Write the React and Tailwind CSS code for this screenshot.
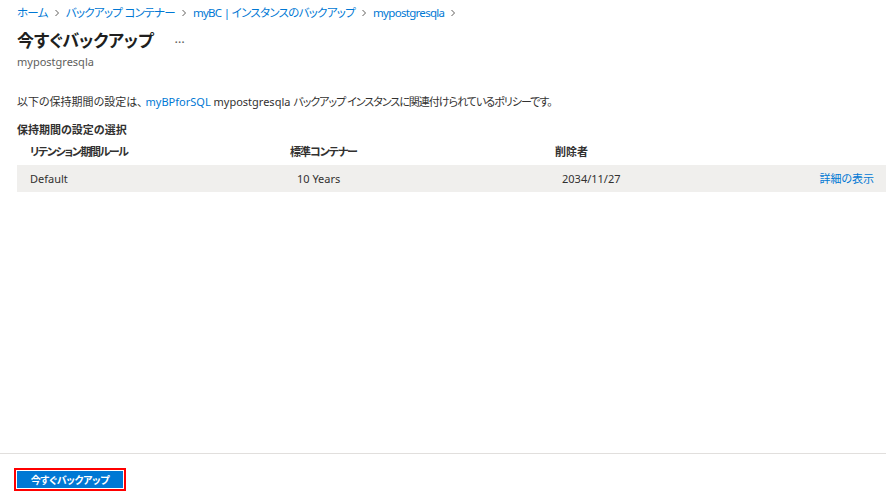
import React from "react";

const font = { fontFamily: '"Noto Sans", "Noto Sans CJK JP", sans-serif' };

function Chevron() {
  return (
    <svg width="8" height="8" viewBox="0 0 8 8" className="mx-[5px] inline-block text-[#605e5c]">
      <path d="M2.5 1 L5.5 4 L2.5 7" fill="none" stroke="currentColor" strokeWidth="1" />
    </svg>
  );
}

export default function App() {
  const crumbs = ["ホーム", "バックアップ コンテナー", "myBC | インスタンスのバックアップ", "mypostgresqla"];
  return (
    <div
      className="w-[886px] h-[501px] bg-white flex flex-col text-[#323130] [font-feature-settings:'palt'] overflow-hidden"
      style={font}
    >
      <div className="flex-1 flex flex-col pl-[17px]">
        <div className="flex items-center h-[14px] mt-[6px] text-[11.5px] text-[#0078d4] leading-none tracking-[-0.7px]">
          {crumbs.map((c, i) => (
            <React.Fragment key={i}>
              <span>{c}</span>
              <Chevron />
            </React.Fragment>
          ))}
        </div>
        <div className="flex items-center mt-[8px] h-[24px]">
          <h1 className="text-[17px] font-bold leading-none text-[#201f1e] tracking-[-0.2px]">今すぐバックアップ</h1>
          <span className="ml-[21px] text-[13px] text-[#605e5c] leading-none -mt-[4px]">…</span>
        </div>
        <div className="mt-[3px] text-[11px] text-[#605e5c] leading-[14px]">mypostgresqla</div>
        <div className="mt-[26px] text-[11px] leading-[14px]">
          以下の保持期間の設定は、 <span className="text-[#0078d4]">myBPforSQL</span> mypostgresqla{" "}
          <span className="tracking-[-1px]">バックアップ インスタンスに関連付けられているポリシーです。</span>
        </div>
        <div className="mt-[14px] text-[11px] font-bold leading-[14px]">保持期間の設定の選択</div>
        <div className="grid grid-cols-[260px_265px_1fr] mt-[8px] text-[11px] font-bold leading-[14px] pl-[13px]">
          <div className="tracking-[-1.4px]">リテンション期間ルール</div>
          <div className="tracking-[-1px]">標準コンテナー</div>
          <div>削除者</div>
        </div>
        <div className="grid grid-cols-[267px_265px_1fr_auto] items-center mt-[6px] h-[27px] bg-[#f0efed] text-[11px] leading-[14px] pl-[13px] pr-[12px]">
          <div>Default</div>
          <div>10 Years</div>
          <div>2034/11/27</div>
          <div className="text-[#0078d4]">詳細の表示</div>
        </div>
      </div>
      <div className="h-px bg-[#e1dfdd]" />
      <div className="h-[47px] flex items-start pt-[14px] pl-[14px]">
        <div className="border-2 border-[#ff0000] p-px bg-white">
          <button className="w-[106px] h-[17px] bg-[#0078d4] text-white text-[10px] font-bold leading-none flex items-center justify-center tracking-[-0.3px]">
            今すぐバックアップ
          </button>
        </div>
      </div>
    </div>
  );
}
